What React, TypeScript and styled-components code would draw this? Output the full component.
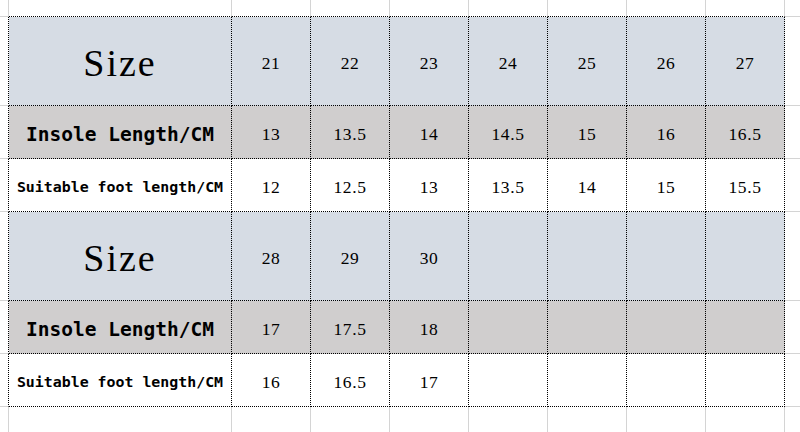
import styled, { createGlobalStyle, css } from 'styled-components';

const GlobalStyle = createGlobalStyle`
  html, body {
    margin: 0;
    padding: 0;
    background: #ffffff;
  }
`;

type Tone = 'size' | 'insole' | 'foot' | 'blank';
type Edge = 'grid' | 'dot' | 'none';

const tones: Record<Tone, string> = {
  size: '#d6dce4',
  insole: '#d0cece',
  foot: '#ffffff',
  blank: '#ffffff',
};

const edge = (e: Edge) => {
  if (e === 'dot') return '1px dotted #000000';
  if (e === 'grid') return '1px solid #d4d4d4';
  return '0';
};

const Sheet = styled.div`
  display: grid;
  grid-template-columns: 9px 223px repeat(7, 79px) 1fr;
  grid-template-rows: 17px 89px 53px 53px 89px 53px 53px 1fr;
  width: 800px;
  height: 432px;
  overflow: hidden;
  background: #ffffff;
`;

const Cell = styled.div<{ $tone: Tone; $right: Edge; $bottom: Edge }>`
  box-sizing: border-box;
  display: flex;
  align-items: center;
  justify-content: center;
  padding-top: 4px;
  background: ${(p) => tones[p.$tone]};
  border-right: ${(p) => edge(p.$right)};
  border-bottom: ${(p) => edge(p.$bottom)};
  color: #000000;
  font-family: 'Liberation Serif', serif;
  font-size: 17.5px;
  letter-spacing: 0.6px;
  white-space: nowrap;
  overflow: hidden;
`;

const Label = styled.span<{ $variant: Tone }>`
  color: #000000;
  ${(p) =>
    p.$variant === 'size'
      ? css`
          font-family: 'Liberation Serif', serif;
          font-size: 38px;
          letter-spacing: 2px;
          font-weight: 400;
        `
      : p.$variant === 'insole'
        ? css`
            font-family: 'DejaVu Sans Mono', 'Liberation Mono', monospace;
            font-size: 19.5px;
            font-weight: 700;
            letter-spacing: 0;
          `
        : css`
            font-family: 'DejaVu Sans Mono', 'Liberation Mono', monospace;
            font-size: 14.9px;
            font-weight: 700;
            letter-spacing: 0;
          `}
`;

type Row = { tone: Tone; label: string; values: string[] };

const table: Row[] = [
  { tone: 'size', label: 'Size', values: ['21', '22', '23', '24', '25', '26', '27'] },
  { tone: 'insole', label: 'Insole Length/CM', values: ['13', '13.5', '14', '14.5', '15', '16', '16.5'] },
  { tone: 'foot', label: 'Suitable foot length/CM', values: ['12', '12.5', '13', '13.5', '14', '15', '15.5'] },
  { tone: 'size', label: 'Size', values: ['28', '29', '30', '', '', '', ''] },
  { tone: 'insole', label: 'Insole Length/CM', values: ['17', '17.5', '18', '', '', '', ''] },
  { tone: 'foot', label: 'Suitable foot length/CM', values: ['16', '16.5', '17', '', '', '', ''] },
];

const ROWS = table.length + 2;
const COLS = 10;

const App = () => {
  const cells = [];
  for (let r = 0; r < ROWS; r++) {
    for (let c = 0; c < COLS; c++) {
      const row = r >= 1 && r <= table.length ? table[r - 1] : null;
      const inTable = row !== null && c >= 1 && c <= 8;
      const right: Edge =
        c === COLS - 1 ? 'none' : inTable || (c === 0 && row) ? 'dot' : 'grid';
      const bottom: Edge =
        r === ROWS - 1 ? 'none' : inTable || (r === 0 && c >= 1 && c <= 8) ? 'dot' : 'grid';
      const tone: Tone = inTable && row ? row.tone : 'blank';
      let content: React.ReactNode = null;
      if (inTable && row) {
        content = c === 1 ? <Label $variant={row.tone}>{row.label}</Label> : row.values[c - 2];
      }
      cells.push(
        <Cell key={`${r}-${c}`} $tone={tone} $right={right} $bottom={bottom}>
          {content}
        </Cell>,
      );
    }
  }

  return (
    <>
      <GlobalStyle />
      <Sheet>{cells}</Sheet>
    </>
  );
};

export default App;
